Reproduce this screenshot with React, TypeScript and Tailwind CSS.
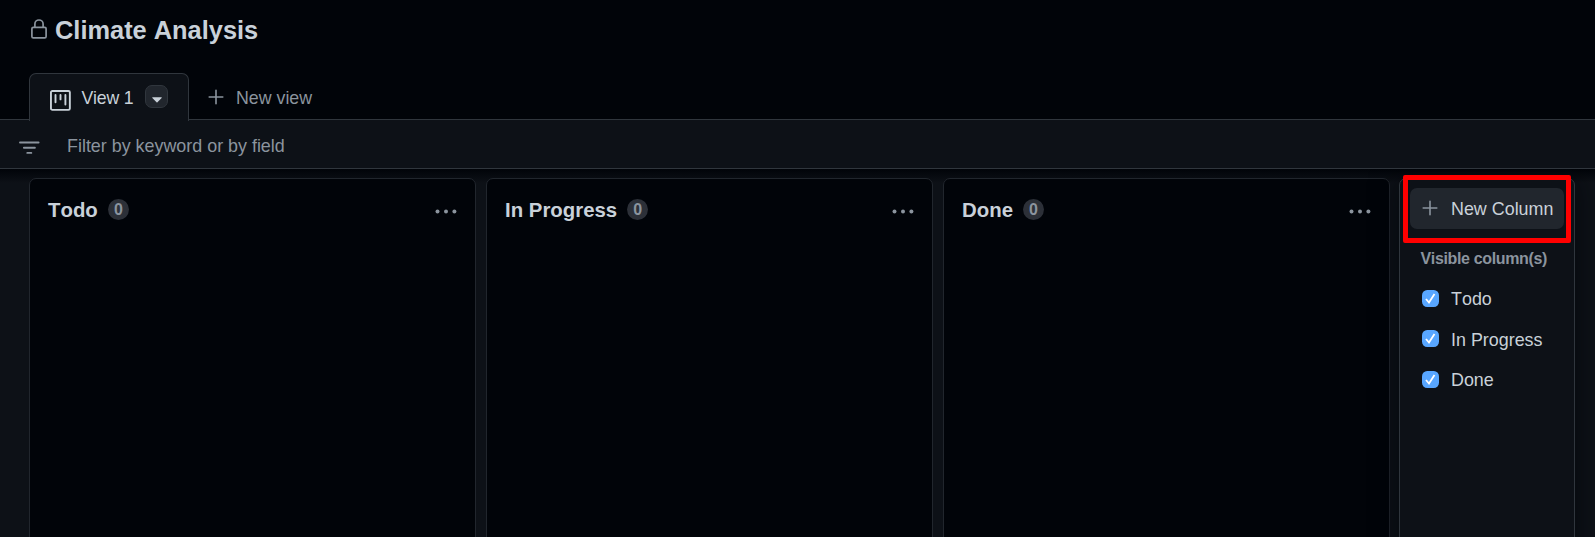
import React from 'react';

const columns = ['Todo', 'In Progress', 'Done'];

function Plus() {
  return (
    <svg width="16" height="16" viewBox="0 0 16 16" fill="none" stroke="#8b949e" strokeWidth="1.6" strokeLinecap="round" className="shrink-0">
      <path d="M8 1.2v13.6M1.2 8h13.6" />
    </svg>
  );
}

function Header() {
  return (
    <header className="flex h-[73px] items-start pl-[31px] pt-[13px]">
      <svg width="16" height="20" viewBox="0 0 16 20" fill="none" stroke="#8b949e" strokeWidth="1.7" className="mt-[6px] shrink-0">
        <rect x="0.9" y="8.4" width="14.2" height="10.4" rx="1.4" />
        <path d="M3.9 8.4V5.1a4.1 4.1 0 0 1 8.2 0v3.3" />
      </svg>
      <h1 className="ml-2 text-[25.4px] font-bold leading-[34px] text-[#c9d1d9]">Climate Analysis</h1>
    </header>
  );
}

function Tabs() {
  return (
    <nav className="flex h-[47px] items-stretch border-b border-[#30363d] pl-[29px]">
      <div className="-mb-[2px] flex h-[48px] w-[160px] items-start rounded-t-[7px] border border-b-0 border-[#30363d] bg-[#0d1117] pl-5 text-[#c9d1d9]">
        <svg width="21" height="21" viewBox="0 0 21 21" fill="none" stroke="#c9d1d9" strokeWidth="1.9" className="mt-4 shrink-0">
          <rect x="0.95" y="0.95" width="18.9" height="18.9" rx="1.4" />
          <path d="M5.5 5v7.2M10.5 5v4.4M15.4 5v9.6" strokeLinecap="round" />
        </svg>
        <span className="ml-[10.5px] mt-[13px] w-[53.5px] whitespace-nowrap text-[17.7px] leading-[22px] tracking-[-0.2px]">View 1</span>
        <span className="ml-[10px] mt-[11px] flex h-[23px] w-[23px] items-center justify-center rounded-[7px] border border-[#30363d] bg-[#21262d]">
          <svg width="10" height="6" viewBox="0 0 11 6" fill="#c9d1d9" className="mt-[7px]">
            <path d="M.8 0h9.4c.5 0 .7.6.4.9L6 5.4a.7.7 0 0 1-1 0L.4.9C.1.6.3 0 .8 0Z" />
          </svg>
        </span>
      </div>
      <div className="flex items-start pl-[19px] pt-[14px] text-[#8b949e]">
        <span className="pt-[2px]"><Plus /></span>
        <span className="ml-3 text-[17.8px] leading-[22px]">New view</span>
      </div>
    </nav>
  );
}

function FilterBar() {
  return (
    <div className="flex h-[49px] items-start border-b border-[#30363d] bg-[#0d1117] pl-[19px] pt-[14px]">
      <svg width="21" height="13" viewBox="0 0 21 13" fill="none" stroke="#8b949e" strokeWidth="1.9" strokeLinecap="round" className="mt-[7px]">
        <path d="M1 1.5h18.6M4.9 6.8h11M8.3 11.9h4" />
      </svg>
      <span className="ml-[27px] mt-px text-[17.9px] leading-[22px] text-[#8b949e]">Filter by keyword or by field</span>
    </div>
  );
}

function Column({ name }: { name: string }) {
  return (
    <section className="flex h-[380px] w-[447px] shrink-0 items-start rounded-t-[7px] border border-[#21262d] bg-[#010409] px-[18px] pt-[18px]">
      <h2 className="text-[20.4px] font-bold leading-[26px] text-[#c9d1d9]">{name}</h2>
      <span className="ml-[10px] mt-[2px] flex h-[21px] w-[21px] items-center justify-center rounded-full bg-[#2c3038] text-[16px] font-bold leading-[21px] text-[#8b949e]">0</span>
      <svg width="22" height="5" viewBox="0 0 22 5" fill="#8b949e" className="ml-auto mt-[12px]">
        <circle cx="2.5" cy="2.5" r="2" />
        <circle cx="11" cy="2.5" r="2" />
        <circle cx="19.4" cy="2.5" r="2" />
      </svg>
    </section>
  );
}

function ColumnPanel() {
  return (
    <aside className="relative -ml-px h-[380px] w-[176px] shrink-0 rounded-t-[7px] border border-[#30363d] bg-[#0d1117] pl-[10px] pt-[9px] shadow-[0_0_28px_rgba(1,4,9,0.7)]">
      <button className="flex h-[41px] w-[154px] items-center rounded-[7px] bg-[#21262d] pl-3 text-[#c9d1d9]">
        <span className="-mt-px"><Plus /></span>
        <span className="ml-[13px] whitespace-nowrap text-[17.9px] leading-[22px]">New Column</span>
      </button>
      <div className="ml-[10.5px] mt-[20px] whitespace-nowrap text-[16px] font-bold leading-[20px] tracking-[-0.35px] text-[#8b949e]">Visible column(s)</div>
      <div className="ml-3 mt-[10px] flex flex-col">
        {columns.map((name) => (
          <label key={name} className="flex h-[40.5px] items-center text-[17.9px] text-[#c9d1d9]">
            <svg width="17" height="17" viewBox="0 0 17 17" className="-mt-[2px] shrink-0">
              <rect width="17" height="17" rx="5.2" fill="#58a6ff" />
              <path d="m4 9 3 3.6 5.5-8.5" fill="none" stroke="white" strokeWidth="1.8" />
            </svg>
            <span className="ml-3 whitespace-nowrap leading-[22px]">{name}</span>
          </label>
        ))}
      </div>
      <div className="pointer-events-none absolute left-[3px] top-[-4px] h-[68px] w-[168px] rounded-[2px] border-[5px] border-[#ff0000]" />
    </aside>
  );
}

export default function App() {
  return (
    <div className="h-[537px] w-[1595px] overflow-hidden bg-[#010409] font-['Liberation_Sans',Arial,sans-serif] [font-kerning:none]">
      <Header />
      <Tabs />
      <FilterBar />
      <main className="h-[368px] overflow-hidden bg-[#0d1117]">
        <div className="flex h-full gap-[10px] bg-linear-to-b from-[#010409] to-transparent to-[14px] pl-[29px] pt-[9px]">
          {columns.map((name) => (
            <Column key={name} name={name} />
          ))}
          <ColumnPanel />
        </div>
      </main>
    </div>
  );
}
